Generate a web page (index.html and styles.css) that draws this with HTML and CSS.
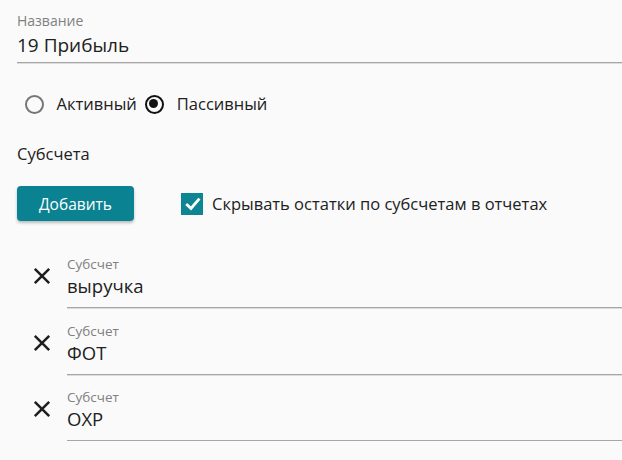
FILE: index.html
```html
<!DOCTYPE html>
<html lang="ru">
<head>
<meta charset="utf-8">
<link rel="stylesheet" href="styles.css">
</head>
<body>
<div class="page">
  <div class="field field-title">
    <div class="field-label">Название</div>
    <div class="field-value">19 Прибыль</div>
  </div>

  <div class="radios">
    <label class="radio">
      <span class="radio-circle"></span>
      <span class="radio-text">Активный</span>
    </label>
    <label class="radio">
      <span class="radio-circle checked"></span>
      <span class="radio-text">Пассивный</span>
    </label>
  </div>

  <div class="section-title">Субсчета</div>

  <div class="actions">
    <button class="btn">Добавить</button>
    <label class="check">
      <span class="check-box">
        <svg width="22" height="22" viewBox="0 0 22 22"><path d="M5.2 11 L10 15.5 L18.4 5.6" fill="none" stroke="#fff" stroke-width="2.8"/></svg>
      </span>
      <span class="check-text">Скрывать остатки по субсчетам в отчетах</span>
    </label>
  </div>

  <div class="rows">
    <div class="row">
      <span class="remove">
        <svg width="18" height="18" viewBox="0 0 18 18"><path d="M1.8 1.8 L16.2 16.2 M16.2 1.8 L1.8 16.2" stroke="#1e1e1e" stroke-width="2.5" fill="none"/></svg>
      </span>
      <div class="field field-row">
        <div class="field-label">Субсчет</div>
        <div class="field-value">выручка</div>
      </div>
    </div>
    <div class="row">
      <span class="remove">
        <svg width="18" height="18" viewBox="0 0 18 18"><path d="M1.8 1.8 L16.2 16.2 M16.2 1.8 L1.8 16.2" stroke="#1e1e1e" stroke-width="2.5" fill="none"/></svg>
      </span>
      <div class="field field-row">
        <div class="field-label">Субсчет</div>
        <div class="field-value">ФОТ</div>
      </div>
    </div>
    <div class="row">
      <span class="remove">
        <svg width="18" height="18" viewBox="0 0 18 18"><path d="M1.8 1.8 L16.2 16.2 M16.2 1.8 L1.8 16.2" stroke="#1e1e1e" stroke-width="2.5" fill="none"/></svg>
      </span>
      <div class="field field-row">
        <div class="field-label">Субсчет</div>
        <div class="field-value">ОХР</div>
      </div>
    </div>
  </div>
</div>
</body>
</html>
```

FILE: styles.css
```css
* { box-sizing: border-box; }
html, body { margin: 0; padding: 0; }
body {
  background: #fafafa;
  font-family: "Open Sans", "Noto Sans", sans-serif;
  color: #212121;
  font-size: 16.5px;
  overflow: hidden;
}
.page {
  padding: 12px 0 0 17px;
}
.field {
  border-bottom: 1px solid #a6a6a6;
  box-shadow: 0 1px 0 #dcdcdc;
}
.field-label {
  font-size: 14px;
  line-height: 17px;
  color: #808080;
}
.field-title .field-value {
  font-size: 19px;
  line-height: 26px;
  margin-top: 3px;
  padding-bottom: 4px;
}
.field-row .field-label {
  font-size: 13.5px;
  line-height: 16px;
}
.field-row .field-value {
  font-size: 18.5px;
  line-height: 26px;
  margin-top: 1px;
  padding-bottom: 8px;
}
.radios {
  display: flex;
  align-items: center;
  height: 24px;
  margin-top: 29px;
  padding-left: 7.5px;
}
.radio {
  display: flex;
  align-items: center;
  line-height: 24px;
  margin-right: 8px;
}
.radio-circle {
  flex: none;
  width: 19px;
  height: 19px;
  border: 2.5px solid #767676;
  border-radius: 50%;
  margin-right: 13px;
  position: relative;
}
.radio-circle.checked {
  border: 2.8px solid #111;
}
.radio-circle.checked::after {
  content: "";
  position: absolute;
  left: 2px;
  top: 2px;
  width: 9.4px;
  height: 9.4px;
  border-radius: 50%;
  background: #111;
}
.section-title {
  line-height: 24px;
  margin-top: 26px;
}
.actions {
  display: flex;
  align-items: center;
  margin-top: 20px;
}
.btn {
  flex: none;
  width: 117px;
  height: 35px;
  border: none;
  border-radius: 4px;
  background: #0a8291;
  color: #fff;
  font-family: inherit;
  font-size: 15.5px;
  padding: 0;
  box-shadow: 0 2px 3px rgba(0,0,0,0.25);
}
.check {
  display: flex;
  align-items: center;
  margin-left: 47px;
}
.check-box {
  flex: none;
  width: 22px;
  height: 22px;
  background: #0e8593;
  display: flex;
  margin-right: 9px;
}
.rows {
  margin-top: 35px;
  display: flex;
  flex-direction: column;
  gap: 14.5px;
}
.row {
  display: flex;
  align-items: center;
}
.remove {
  flex: none;
  width: 50px;
  display: flex;
  justify-content: center;
  margin-top: -12px;
}
.field-row {
  flex: 1;
}
```
